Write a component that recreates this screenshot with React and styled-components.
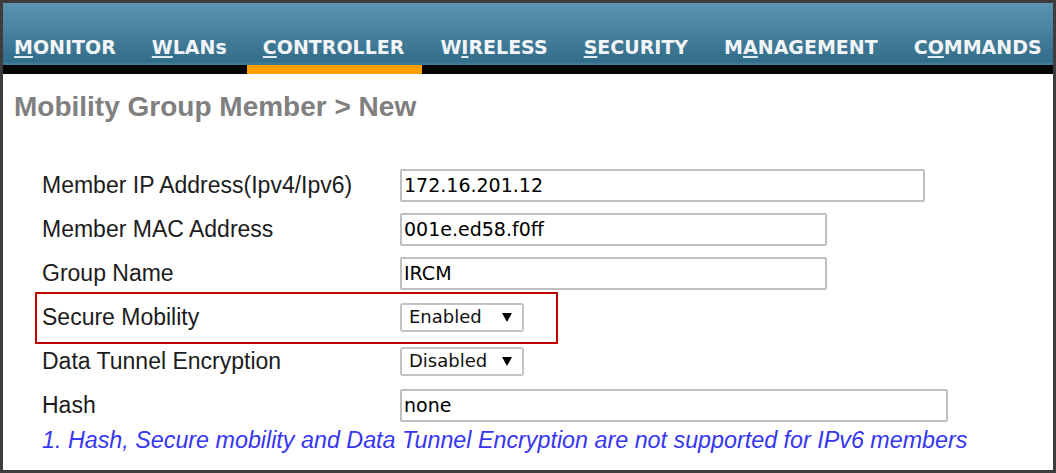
import React from "react";
import styled, { createGlobalStyle } from "styled-components";

const GlobalStyle = createGlobalStyle`
  html, body {
    margin: 0;
    padding: 0;
    background: #ffffff;
  }
  body {
    width: 1056px;
    height: 473px;
    overflow: hidden;
  }
`;

const Frame = styled.div`
  width: 1056px;
  height: 473px;
  box-sizing: border-box;
  border: 3px solid #3d3d3d;
  background: #ffffff;
  overflow: hidden;
`;

const NavBar = styled.nav`
  display: flex;
  gap: 36px;
  height: 71px;
  padding-left: 11px;
  background: linear-gradient(
    to bottom,
    #5c94b0 0,
    #326d8a 59px,
    #3f7a96 60px,
    #3f7a96 62px,
    #050505 62px,
    #050505 71px
  );
`;

const NavItem = styled.div`
  display: flex;
  flex-direction: column;
`;

const NavLabel = styled.div`
  height: 62px;
  box-sizing: border-box;
  display: flex;
  align-items: flex-end;
  padding-bottom: 7px;
  font-family: "DejaVu Sans", Verdana, sans-serif;
  font-weight: bold;
  font-size: 19px;
  line-height: 22px;
  color: #f2f5f7;
  white-space: nowrap;

  u {
    text-decoration: underline;
    text-decoration-thickness: 2px;
    text-underline-offset: 2px;
    text-decoration-color: #e6edf2;
  }
`;

const Indicator = styled.div`
  height: 9px;
  margin: 0 -18px 0 -16px;
  background: ${(p) => (p.active ? "#ff9f00" : "transparent")};
`;

const Heading = styled.h1`
  margin: 0;
  padding: 17px 0 0 11px;
  font-family: "Liberation Sans", Arial, sans-serif;
  font-weight: bold;
  font-size: 28px;
  line-height: 32px;
  color: #808080;
`;

const Form = styled.div`
  margin-top: 40px;
  padding-left: 39px;
`;

const Row = styled.div`
  position: relative;
  display: flex;
  align-items: center;
  height: 44px;

  ${(p) =>
    p.highlight &&
    `
    &::after {
      content: "";
      position: absolute;
      left: -7px;
      top: -3px;
      width: 523px;
      height: 52px;
      box-sizing: border-box;
      border: 2px solid #c00000;
      pointer-events: none;
    }
  `}
`;

const Label = styled.div`
  width: 358px;
  flex-shrink: 0;
  font-family: "Liberation Sans", Arial, sans-serif;
  font-size: 23px;
  line-height: 26px;
  color: #1c1c1c;
`;

const TextField = styled.input`
  width: ${(p) => p.w}px;
  height: 33px;
  box-sizing: border-box;
  margin: 0;
  padding: 0 2px;
  border: 2px solid #bfbfbf;
  border-radius: 2px;
  background: #ffffff;
  font-family: "DejaVu Sans", Verdana, sans-serif;
  font-size: 19px;
  color: #000000;
  outline: none;
`;

const Select = styled.div`
  width: 124px;
  height: 29px;
  box-sizing: border-box;
  display: flex;
  align-items: center;
  justify-content: space-between;
  padding: 0 10px 0 7px;
  border: 2px solid #c4c4c4;
  border-radius: 3px;
  background: #ffffff;
  font-family: "DejaVu Sans", Verdana, sans-serif;
  font-size: 18px;
  line-height: 20px;
  color: #111111;
`;

const Note = styled.div`
  font-family: "Liberation Sans", Arial, sans-serif;
  font-style: italic;
  font-size: 23.3px;
  line-height: 26px;
  color: #3636f2;
  white-space: nowrap;
`;

const Arrow = () => (
  <svg width="10" height="9" viewBox="0 0 10 9">
    <polygon points="0,0 10,0 5,9" fill="#000" />
  </svg>
);

const tabs = [
  { pre: "", key: "M", post: "ONITOR" },
  { pre: "", key: "W", post: "LANs" },
  { pre: "", key: "C", post: "ONTROLLER", active: true },
  { pre: "W", key: "I", post: "RELESS" },
  { pre: "", key: "S", post: "ECURITY" },
  { pre: "M", key: "A", post: "NAGEMENT" },
  { pre: "C", key: "O", post: "MMANDS" },
];

const App = () => {
  return (
    <>
      <GlobalStyle />
      <Frame>
        <NavBar>
          {tabs.map((t) => (
            <NavItem key={t.pre + t.key + t.post}>
              <NavLabel>
                <span>
                  {t.pre}
                  <u>{t.key}</u>
                  {t.post}
                </span>
              </NavLabel>
              <Indicator active={t.active} />
            </NavItem>
          ))}
        </NavBar>

        <Heading>Mobility Group Member &gt; New</Heading>

        <Form>
          <Row>
            <Label>Member IP Address(Ipv4/Ipv6)</Label>
            <TextField w={525} defaultValue="172.16.201.12" />
          </Row>
          <Row>
            <Label>Member MAC Address</Label>
            <TextField w={427} defaultValue="001e.ed58.f0ff" />
          </Row>
          <Row>
            <Label>Group Name</Label>
            <TextField w={427} defaultValue="IRCM" />
          </Row>
          <Row highlight>
            <Label>Secure Mobility</Label>
            <Select>
              <span>Enabled</span>
              <Arrow />
            </Select>
          </Row>
          <Row>
            <Label>Data Tunnel Encryption</Label>
            <Select>
              <span>Disabled</span>
              <Arrow />
            </Select>
          </Row>
          <Row>
            <Label>Hash</Label>
            <TextField w={548} defaultValue="none" />
          </Row>
          <Note>
            1. Hash, Secure mobility and Data Tunnel Encryption are not
            supported for IPv6 members
          </Note>
        </Form>
      </Frame>
    </>
  );
};

export default App;
